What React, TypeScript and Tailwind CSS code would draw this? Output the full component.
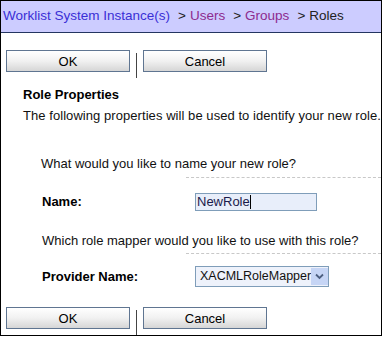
import React from "react";

const font = { fontFamily: '"Liberation Sans", Arial, sans-serif' };

function Btn({ label }: { label: string }) {
  return (
    <div className="w-[124px] h-[22px] border border-[#5f7591] bg-gradient-to-b from-white via-[#f1f1f1] to-[#d6d6d6] flex items-center justify-center text-[13px] text-black leading-none">
      {label}
    </div>
  );
}

export default function App() {
  return (
    <div className="w-[383px] h-[337px] bg-white" style={font}>
      <div className="w-[382px] h-[336px] border border-black flex flex-col relative overflow-hidden">
        {/* header */}
        <div className="h-[32px] bg-[#ccccff] border-b border-[#243561] flex items-center pl-[2px] text-[13.5px] whitespace-nowrap shrink-0">
          <span className="text-[#3a2fd6]">Worklist System Instance(s)</span>
          <span className="ml-[8px] text-[#222]">&gt;</span>
          <span className="ml-[4px] text-[#8e2a8e]">Users</span>
          <span className="ml-[8px] text-[#222]">&gt;</span>
          <span className="ml-[4px] text-[#8e2a8e]">Groups</span>
          <span className="ml-[8px] text-[#222]">&gt;</span>
          <span className="ml-[4px] text-[#222]">Roles</span>
        </div>

        {/* top buttons */}
        <div className="flex items-start pl-[5px] mt-[17px] h-[29px] shrink-0">
          <Btn label="OK" />
          <div className="w-px h-[25px] bg-[#444] mt-[3px] ml-[6px] mr-[6px]" />
          <Btn label="Cancel" />
        </div>

        <div className="pl-[22px] mt-[8px] text-[13px] font-bold text-black leading-[16px] h-[16px]">
          Role Properties
        </div>
        <div className="pl-[22px] mt-[5px] text-[13px] tracking-[0.06px] text-[#111] leading-[16px] h-[16px] whitespace-nowrap">
          The following properties will be used to identify your new role.
        </div>

        <div className="pl-[40px] mt-[32px] text-[13px] text-[#111] leading-[16px] h-[16px] whitespace-nowrap">
          What would you like to name your new role?
        </div>
        <div className="ml-[185px] mt-[5px] border-t border-dashed border-[#c8c8c8] h-0" />

        <div className="flex items-center mt-[15px] h-[18px]">
          <div className="pl-[41px] w-[194px] text-[13px] font-bold text-black">Name:</div>
          <div className="w-[122px] h-[18px] border border-[#7f9db9] bg-[#e8eefa] flex items-center pl-[1px] text-[13px] text-[#1a1a4a]">
            <span>NewRole</span>
            <span className="w-px h-[14px] bg-black" />
          </div>
        </div>

        <div className="pl-[41px] mt-[22px] text-[13px] text-[#111] leading-[16px] h-[16px] whitespace-nowrap">
          Which role mapper would you like to use with this role?
        </div>
        <div className="ml-[185px] mt-[4px] border-t border-dashed border-[#c8c8c8] h-0" />

        <div className="flex items-center mt-[12px] h-[21px]">
          <div className="pl-[41px] w-[194px] text-[13px] font-bold text-black">Provider Name:</div>
          <div className="w-[134px] h-[21px] border border-[#7f9db9] bg-[#eef2fb] flex items-center text-[#111]">
            <span className="pl-[4px] flex-1 text-[12.5px] whitespace-nowrap">XACMLRoleMapper</span>
            <span className="w-[17px] h-[17px] mr-[1px] bg-[#c6d5f5] flex items-center justify-center shrink-0">
              <svg width="9" height="7" viewBox="0 0 9 7">
                <path d="M1 1.5 L4.5 5 L8 1.5" fill="none" stroke="#4d5f80" strokeWidth="1.8" />
              </svg>
            </span>
          </div>
        </div>

        {/* bottom buttons */}
        <div className="flex items-start pl-[5px] mt-[20px] flex-1">
          <Btn label="OK" />
          <div className="w-px h-full bg-[#444] mt-[3px] ml-[6px] mr-[6px]" />
          <Btn label="Cancel" />
        </div>
      </div>
    </div>
  );
}
